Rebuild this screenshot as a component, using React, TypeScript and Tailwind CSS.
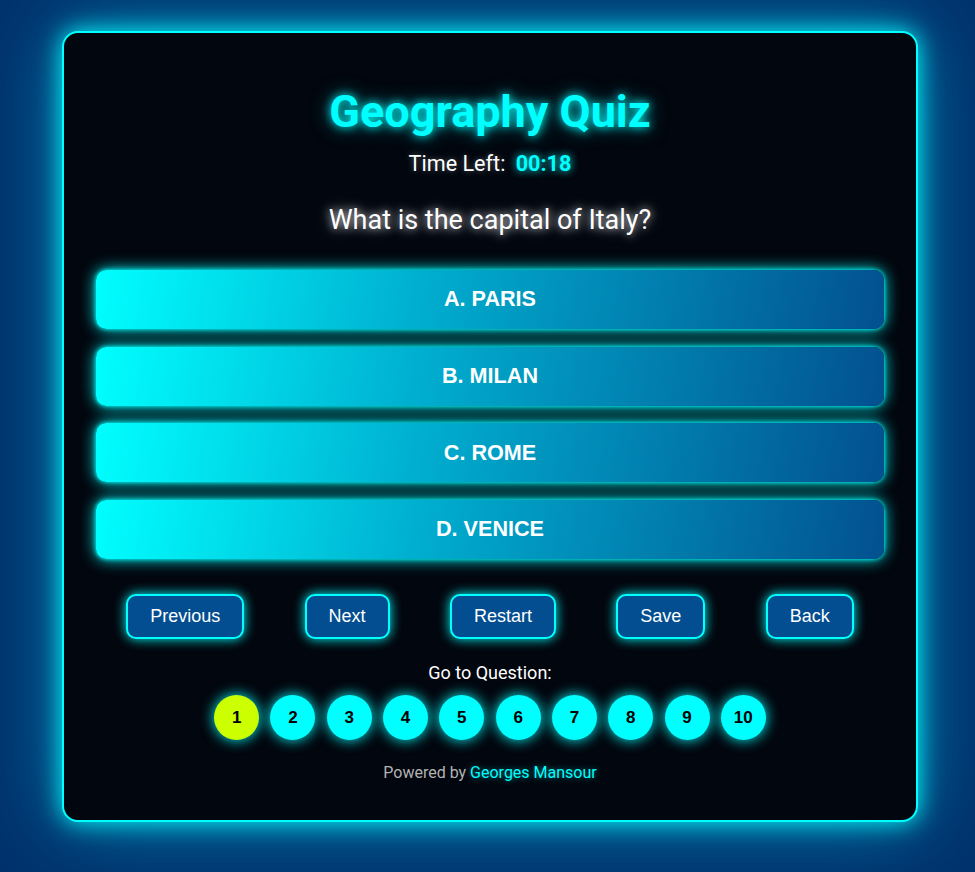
import React from "react";

const options = ["A. PARIS", "B. MILAN", "C. ROME", "D. VENICE"];
const navs = ["Previous", "Next", "Restart", "Save", "Back"];

export default function App() {
  return (
    <div className="min-h-[872px] w-full bg-[#00326c] pt-[31px] pb-[51px] [font-family:Roboto,'Liberation_Sans',sans-serif]">
      <div className="ml-[62px] w-[856px] rounded-[16px] border-2 border-[#00ffff] bg-[#02060e] px-[32px] pt-[52px] pb-[38px] shadow-[0_0_25px_#00ffff,0_0_80px_rgba(0,220,255,0.5)]">
        <h1 className="text-center text-[45px] leading-[53px] font-bold text-[#00ffff] [text-shadow:0_0_10px_#00ffff,0_0_20px_rgba(0,255,255,0.5)]">
          Geography Quiz
        </h1>
        <div className="mt-[13px] text-center text-[21.6px] leading-[25px] text-white [text-shadow:0_0_6px_rgba(255,255,255,0.35)]">
          Time Left:{" "}
          <span className="ml-[5px] font-bold text-[#00ffff] [text-shadow:0_0_8px_#00ffff]">00:18</span>
        </div>
        <div className="mt-[28px] text-center text-[27px] leading-[32px] text-white [text-shadow:0_0_8px_rgba(255,255,255,0.8),0_0_18px_rgba(255,255,255,0.4)]">
          What is the capital of Italy?
        </div>
        <div className="mt-[34px] flex flex-col gap-[17.7px]">
          {options.map((o) => (
            <div
              key={o}
              className="flex h-[59px] items-center justify-center rounded-[10px] bg-[linear-gradient(100deg,#00ffff_0%,#00b0d0_40%,#02508f_100%)] text-[21.6px] font-bold text-white [font-family:'Liberation_Sans',Arial,sans-serif] shadow-[0_0_16px_#00ffff,0_0_4px_#00ffff]"
            >
              {o}
            </div>
          ))}
        </div>
        <div className="mt-[35px] flex justify-around">
          {navs.map((n) => (
            <div
              key={n}
              className="rounded-[10px] border-2 border-[#00ffff] bg-[#024e91] px-[22px] py-[10px] text-[18px] leading-[21px] text-white [font-family:'Liberation_Sans',Arial,sans-serif] shadow-[0_0_12px_#00ffff]"
            >
              {n}
            </div>
          ))}
        </div>
        <div className="mt-[24px] text-center text-[18px] leading-[20px] text-white">Go to Question:</div>
        <div className="mt-[12px] flex justify-center gap-[11.3px]">
          {Array.from({ length: 10 }, (_, i) => (
            <div
              key={i}
              className={
                "flex h-[45px] w-[45px] items-center justify-center rounded-full text-[17px] font-bold text-black [font-family:'Liberation_Sans',Arial,sans-serif] shadow-[0_0_14px_#00ffff] " +
                (i === 0 ? "bg-[#ccff00]" : "bg-[#00ffff]")
              }
            >
              {i + 1}
            </div>
          ))}
        </div>
        <div className="mt-[23px] text-center text-[16px] leading-[19px] text-[#b3b3b3]">
          Powered by <span className="text-[#00ffff] [text-shadow:0_0_6px_rgba(0,255,255,0.5)]">Georges Mansour</span>
        </div>
      </div>
    </div>
  );
}
